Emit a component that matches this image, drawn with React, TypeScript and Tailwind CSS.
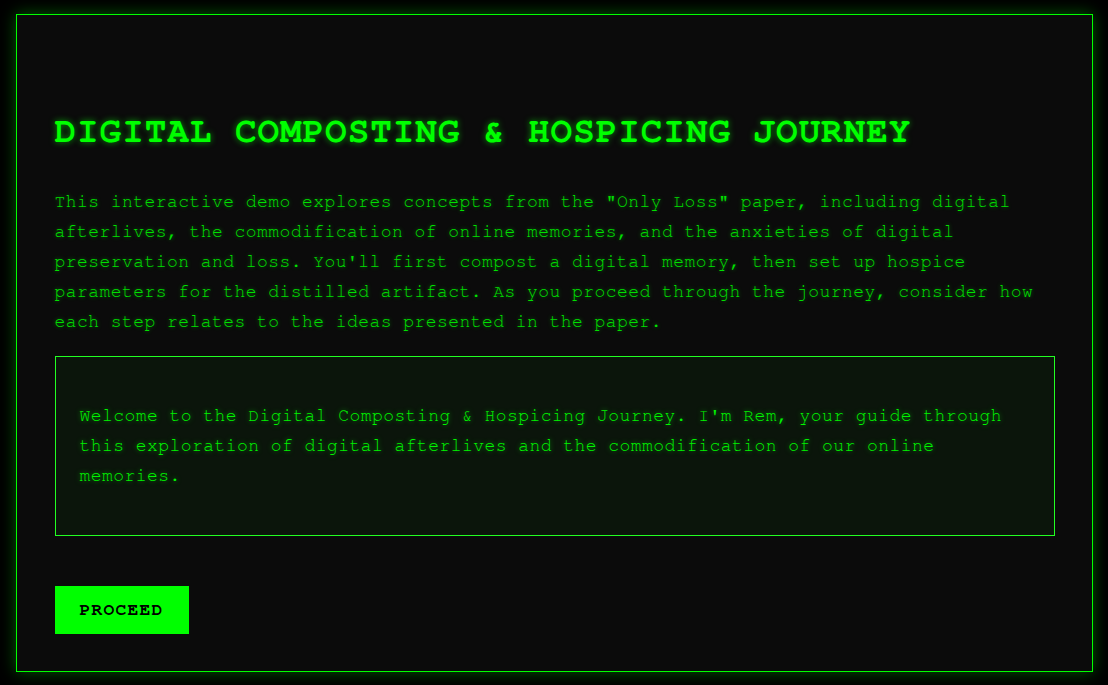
import React from "react";

export default function App() {
  const mono = { fontFamily: '"Nimbus Mono PS", "Nimbus Mono L", FreeMono, Courier, "Courier New", "Liberation Mono", monospace' };
  return (
    <div className="min-h-[685px] bg-black pl-[16px] pr-[15px] pt-[14px] pb-[13px]" style={mono}>
      <div className="border border-[#00ff00] bg-[#0b0b0b] shadow-[0_0_15px_rgba(0,255,0,0.35)] pt-[97px] pb-[37px]">
        <div className="max-w-[1000px] mx-auto">
          <h1 className="text-[36px] font-bold leading-[38px] tracking-[0.95px] text-[#00ff00] [text-shadow:0_0_6px_rgba(0,255,0,0.6)]">
            DIGITAL COMPOSTING &amp; HOSPICING JOURNEY
          </h1>
          <p className="mt-[37px] text-[18px] leading-[30px] tracking-[0.45px] text-[#00e000] [text-shadow:0_0_4px_rgba(0,255,0,0.45)]">
            This interactive demo explores concepts from the "Only Loss" paper, including digital afterlives, the commodification of online memories, and the anxieties of digital preservation and loss. You'll first compost a digital memory, then set up hospice parameters for the distilled artifact. As you proceed through the journey, consider how each step relates to the ideas presented in the paper.
          </p>
          <div className="mt-[19px] border border-[#22ff22] bg-[#0b150b] px-[24px] py-[44px]">
            <p className="text-[18px] leading-[30px] tracking-[0.45px] text-[#00f500] [text-shadow:0_0_5px_rgba(0,255,0,0.55)]">
              Welcome to the Digital Composting &amp; Hospicing Journey. I'm Rem, your guide through this exploration of digital afterlives and the commodification of our online memories.
            </p>
          </div>
          <button className="mt-[50px] h-[48px] w-[134px] bg-[#00ff00] text-black text-[18px] font-bold tracking-[1.2px] flex items-center justify-center" style={mono}>
            PROCEED
          </button>
        </div>
      </div>
    </div>
  );
}
